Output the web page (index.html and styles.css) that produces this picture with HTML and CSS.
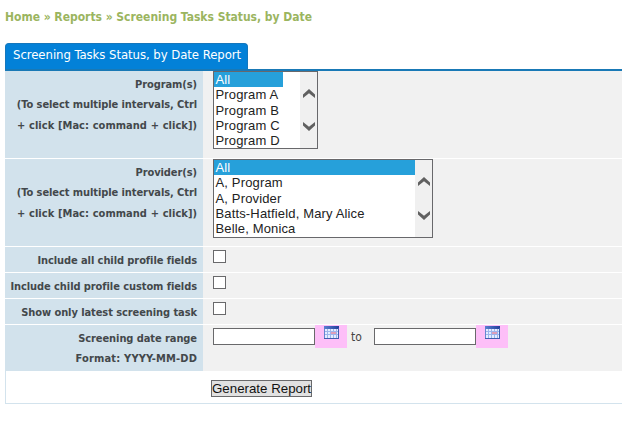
FILE: index.html
```html
<!DOCTYPE html>
<html lang="en">
<head>
<meta charset="utf-8">
<title>Screening Tasks Status, by Date</title>
<link rel="stylesheet" href="styles.css">
</head>
<body>
<svg class="defs" width="0" height="0" aria-hidden="true">
  <defs>
    <linearGradient id="head" x1="0" x2="1" y1="0" y2="0"><stop offset="0" stop-color="#5a7fd0"/><stop offset="1" stop-color="#233f9c"/></linearGradient>
    <symbol id="calendar" viewBox="0 0 15 13">
      <rect width="15" height="13" fill="#6686cf"/>
      <rect width="15" height="3" fill="url(#head)"/>
      <path d="M1 3h13v9H1z" fill="#e4edff"/>
      <path d="M1 5.5h13M1 8.5h13M3.5 3v9M6.5 3v9M9.5 3v9M12.5 3v9" stroke="#9db5ec" fill="none"/>
      <path d="M7 6h5v2H7z" fill="#df9eb8"/>
      <path d="M0 12.5h15M14.5 2v11" stroke="#405fae" fill="none"/>
    </symbol>
    <symbol id="up" viewBox="0 0 12 9"><path d="M0 5.6 6 0l6 5.6V9L6 4.2 0 9z" fill="#606060"/></symbol>
    <symbol id="down" viewBox="0 0 12 9"><path d="M0 3.4 6 9l6-5.6V0L6 4.8 0 0z" fill="#606060"/></symbol>
  </defs>
</svg>
<nav class="crumbs"><span>Home » Reports » Screening Tasks Status, by Date</span></nav>
<h1 class="tab"><span>Screening Tasks Status, by Date Report</span></h1>
<form class="panel">
  <div class="row tall">
    <div class="label"><span>Program(s)</span><span>(To select multiple intervals, Ctrl</span><span class="wide">+ click [Mac: command + click])</span></div>
    <div class="field">
      <div class="listbox programs">
        <ul><li class="selected">All</li><li>Program A</li><li>Program B</li><li>Program C</li><li>Program D</li></ul>
        <div class="scroll"><svg><use href="#up"/></svg><svg><use href="#down"/></svg></div>
      </div>
    </div>
  </div>
  <div class="row tall">
    <div class="label"><span>Provider(s)</span><span>(To select multiple intervals, Ctrl</span><span class="wide">+ click [Mac: command + click])</span></div>
    <div class="field">
      <div class="listbox providers">
        <ul><li class="selected">All</li><li>A, Program</li><li>A, Provider</li><li>Batts-Hatfield, Mary Alice</li><li>Belle, Monica</li></ul>
        <div class="scroll"><svg><use href="#up"/></svg><svg><use href="#down"/></svg></div>
      </div>
    </div>
  </div>
  <div class="row"><div class="label"><span>Include all child profile fields</span></div><div class="field"><input type="checkbox"></div></div>
  <div class="row"><div class="label"><span>Include child profile custom fields</span></div><div class="field"><input type="checkbox"></div></div>
  <div class="row"><div class="label"><span>Show only latest screening task</span></div><div class="field"><input type="checkbox"></div></div>
  <div class="row dates">
    <div class="label"><span>Screening date range</span><span class="wide">Format: YYYY-MM-DD</span></div>
    <div class="field">
      <input type="text"><span class="picker"><svg><use href="#calendar"/></svg></span>
      <span class="to">to</span>
      <input type="text"><span class="picker"><svg><use href="#calendar"/></svg></span>
    </div>
  </div>
  <div class="actions"><button type="button">Generate Report</button></div>
</form>
</body>
</html>
```
FILE: styles.css
```css
* { box-sizing: border-box; }
body { margin: 0; padding: 0 1px 0 5px; background: #fff; overflow: hidden; font-family: "DejaVu Sans Condensed", "DejaVu Sans", sans-serif; }
.defs { position: absolute; }
svg { display: block; }
.crumbs { height: 43px; padding-top: 9px; font-size: 12px; line-height: 17px; font-weight: bold; color: #9bb55f; white-space: nowrap; letter-spacing: -0.02px; }
.tab { width: 243px; height: 26px; margin: 0; padding-left: 7px; background: #0381d8; border: 1px solid #1477bd; border-bottom: 0; border-radius: 4px 4px 0 0; color: #fff; font-size: 13px; line-height: 22px; font-weight: normal; white-space: nowrap; letter-spacing: -0.05px; }
.panel { height: 335px; border-top: 2px solid #1979b6; border-bottom: 1px solid #d3e3ed; }
.row { display: flex; height: 26px; border-bottom: 1px solid #fff; }
.row.tall { height: 88px; }
.row.dates { height: 46px; border: 0; }
.label { width: 198px; padding: 4px 6px 0 0; background: #d2e2ec; color: #43484b; font-size: 11px; font-weight: bold; line-height: 20.4px; text-align: right; white-space: nowrap; letter-spacing: -0.08px; }
.label span { display: block; }
.label .wide { letter-spacing: 0.03px; word-spacing: 0.2px; }
.dates .label .wide { letter-spacing: 0.15px; }
.field { flex: 1; display: flex; align-items: flex-start; padding-left: 10px; background: #f1f1f1; }
.listbox { display: flex; height: 78px; border: 1px solid #68686b; background: #fff; font: 13px/15.3px "Liberation Sans", Arial, sans-serif; letter-spacing: 0.15px; color: #222; }
.programs { width: 105px; }
.providers { width: 220px; height: 79px; }
.listbox ul { flex: 1; margin: 0; padding: 0; list-style: none; white-space: nowrap; overflow: hidden; }
.listbox li { height: 15.3px; padding-left: 1.5px; }
.listbox .selected { background: #26a0da; color: #fff; }
.programs .selected { width: 69px; }
.scroll { width: 17px; display: flex; flex-direction: column; align-items: center; justify-content: space-between; padding: 17px 0 17px; background: #f0f0f0; }
.scroll svg { width: 12px; height: 9px; }
input { appearance: none; margin: 0; padding: 0; background: #fff; border: 1px solid #69696b; border-radius: 0; }
input[type="checkbox"] { width: 13px; height: 13px; margin-top: 3px; }
input[type="text"] { width: 102px; height: 17px; margin-top: 3px; }
.picker { width: 32px; height: 23px; padding: 1px 0 0 9px; background: #fdbff8; }
.picker svg { width: 15px; height: 13px; }
.to { width: 27px; padding: 3px 0 0 4px; font-size: 12px; line-height: 18px; color: #444; }
.actions { padding: 9px 0 0 206px; border-left: 1px solid #d3e3ed; height: 32px; }
button { display: block; width: 101px; height: 17px; padding: 0; margin-left: -1px; border: 1px solid #69696b; border-radius: 0; background: #e1e1e1; color: #111; font: 13.3px/15px "Liberation Sans", Arial, sans-serif; white-space: nowrap; }
```
